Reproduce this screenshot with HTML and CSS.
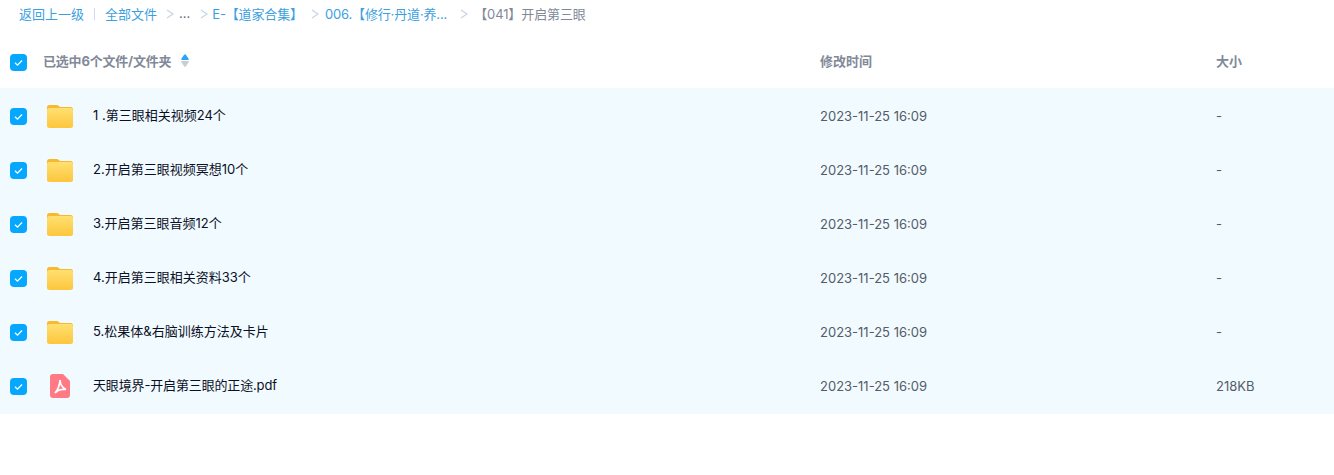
FILE: index.html
```html
<!DOCTYPE html>
<html lang="zh-CN">
<head>
<meta charset="utf-8">
<title>文件列表</title>
<link rel="stylesheet" href="styles.css">
</head>
<body>
<svg class="defs" aria-hidden="true">
  <defs>
    <linearGradient id="folder-fill" x1="0" y1="0" x2="0" y2="1">
      <stop offset="0" stop-color="#ffe071"/>
      <stop offset="1" stop-color="#fdc63c"/>
    </linearGradient>
  </defs>
  <symbol id="tick" viewBox="0 0 17 17"><path d="M5 8.800l2.500 2.400L12 6.500"/></symbol>
  <symbol id="chev" viewBox="0 0 8 10"><path d="M1 1l6 4-6 4"/></symbol>
  <symbol id="folder" viewBox="0 0 26 23">
    <path class="tab" d="M2.500 0h7c1 0 1.800.4 2.400 1.100L13 2h10.500A2.500 2.500 0 0 1 26 4.500V10H0V2.500A2.500 2.500 0 0 1 2.500 0z"/>
    <rect class="body" y="3" width="26" height="20" rx="2.500"/>
  </symbol>
  <symbol id="pdf" viewBox="0 0 20 24">
    <path class="pdf-bg" d="M3 0h10l7 7v14a3 3 0 0 1-3 3H3a3 3 0 0 1-3-3V3a3 3 0 0 1 3-3z"/>
    <path class="pdf-mark" d="M10 6c.2 4.500 1.500 7.500 6 9.500-3.800-.5-8.500.5-11 3.500 2.500-3 4.800-8 5-13z"/>
  </symbol>
</svg>
<nav class="crumbs">
  <a class="link">返回上一级</a>
  <span class="divider"></span>
  <a class="link">全部文件</a>
  <svg class="sep sep-a"><use href="#chev"/></svg>
  <span class="more">...</span>
  <svg class="sep sep-b"><use href="#chev"/></svg>
  <a class="link tight">E-【道家合集】</a>
  <svg class="sep sep-c"><use href="#chev"/></svg>
  <a class="link tight">006.【修行·丹道·养...</a>
  <svg class="sep sep-d"><use href="#chev"/></svg>
  <span class="current">【041】开启第三眼</span>
</nav>
<main class="table">
  <div class="row head">
    <span class="check"><svg><use href="#tick"/></svg></span>
    <span class="name"><span class="head-label">已选中6个文件/文件夹</span><svg class="sort" viewBox="0 0 9 14"><path class="up" d="M4.500 0c.4 0 .7.2 1 .6L8.600 5c.5.700.1 1.300-.7 1.300H1.100C.3 6.300-.1 5.700.4 5L3.500.6c.3-.4.600-.6 1-.6z"/><path class="down" d="M4.500 14c.4 0 .7-.2 1-.6L8.600 9c.5-.7.1-1.300-.7-1.300H1.100C.3 7.700-.1 8.300.4 9l3.100 4.400c.3.400.6.600 1 .6z"/></svg></span>
    <span class="time">修改时间</span>
    <span class="size">大小</span>
  </div>
  <div class="row item">
    <span class="check"><svg><use href="#tick"/></svg></span>
    <svg class="icon"><use href="#folder"/></svg>
    <span class="name">1 .第三眼相关视频24个</span>
    <span class="time">2023-11-25 16:09</span>
    <span class="size">-</span>
  </div>
  <div class="row item">
    <span class="check"><svg><use href="#tick"/></svg></span>
    <svg class="icon"><use href="#folder"/></svg>
    <span class="name">2.开启第三眼视频冥想10个</span>
    <span class="time">2023-11-25 16:09</span>
    <span class="size">-</span>
  </div>
  <div class="row item">
    <span class="check"><svg><use href="#tick"/></svg></span>
    <svg class="icon"><use href="#folder"/></svg>
    <span class="name">3.开启第三眼音频12个</span>
    <span class="time">2023-11-25 16:09</span>
    <span class="size">-</span>
  </div>
  <div class="row item">
    <span class="check"><svg><use href="#tick"/></svg></span>
    <svg class="icon"><use href="#folder"/></svg>
    <span class="name">4.开启第三眼相关资料33个</span>
    <span class="time">2023-11-25 16:09</span>
    <span class="size">-</span>
  </div>
  <div class="row item">
    <span class="check"><svg><use href="#tick"/></svg></span>
    <svg class="icon"><use href="#folder"/></svg>
    <span class="name">5.松果体&amp;右脑训练方法及卡片</span>
    <span class="time">2023-11-25 16:09</span>
    <span class="size">-</span>
  </div>
  <div class="row item last">
    <span class="check"><svg><use href="#tick"/></svg></span>
    <svg class="icon icon-pdf"><use href="#pdf"/></svg>
    <span class="name tight-name">天眼境界-开启第三眼的正途.pdf</span>
    <span class="time">2023-11-25 16:09</span>
    <span class="size">218KB</span>
  </div>
</main>
</body>
</html>
```

FILE: styles.css
```css
* { box-sizing: border-box; }
html, body { margin: 0; padding: 0; background: #fff; }
body {
  width: 1334px;
  height: 475px;
  overflow: hidden;
  font-family: Inter, "Noto Sans CJK SC", sans-serif;
  font-size: 13px;
}
.defs { position: absolute; width: 0; height: 0; }
.crumbs {
  display: flex;
  align-items: center;
  height: 32px;
  padding: 0 0 6px 19px;
  color: #818999;
}
.link { color: #3b9fdf; white-space: nowrap; }
.tight { letter-spacing: -0.15px; }
.divider { width: 1px; height: 12px; margin: 2px 10px 0 10px; background: #cfdbe8; }
.sep {
  width: 8px;
  height: 10px;
  fill: none;
  stroke: #c6d4e4;
  stroke-width: 1.200;
}
.sep-a { margin: 2px 5px 0 9px; }
.sep-b { margin: 2px 4px 0 10px; }
.sep-c { margin: 2px 6px 0 8px; }
.sep-d { margin: 2px 6px 0 13px; }
.more { color: #636d7e; }
.current { color: #818999; white-space: nowrap; letter-spacing: -0.1px; }
.row {
  display: grid;
  grid-template-columns: 27px 56px 727px 396px 1fr;
  align-items: center;
  padding-left: 10px;
}
.head { height: 56px; color: #818999; font-weight: 700; }
.head > * { grid-row: 1; }
.head .check { grid-column: 1; margin-top: 4px; }
.head .name { grid-column: 1 / 4; margin-left: 33px; display: flex; align-items: center; }
.head .time { grid-column: 4; }
.head .size { grid-column: 5; }
.head-label { letter-spacing: -0.2px; }
.sort { width: 8px; height: 13px; margin-left: 10px; }
.up { fill: #2ca6f4; }
.down { fill: #c8ced6; }
.item { height: 54px; padding-top: 2px; background: #f1fafe; }
.item.last { height: 56px; padding-bottom: 2px; }
.item .name { color: #0b1026; margin-bottom: 4px; }
.item .tight-name { letter-spacing: -0.15px; }
.item .time, .item .size { color: #555c69; }
.check {
  display: flex;
  width: 17px;
  height: 17px;
  border-radius: 4px;
  background: #06a7ff;
}
.check svg { width: 17px; height: 17px; fill: none; stroke: #fff; stroke-width: 1.300; }
.icon { width: 26px; height: 23px; margin-left: 10px; }
.icon-pdf { width: 20px; height: 24px; margin-left: 13px; }
.tab { fill: #f9b92f; }
.body { fill: url(#folder-fill); }
.pdf-bg { fill: #ff7a85; }
.pdf-mark { fill: none; stroke: #fff; stroke-width: 1.700; }
```
